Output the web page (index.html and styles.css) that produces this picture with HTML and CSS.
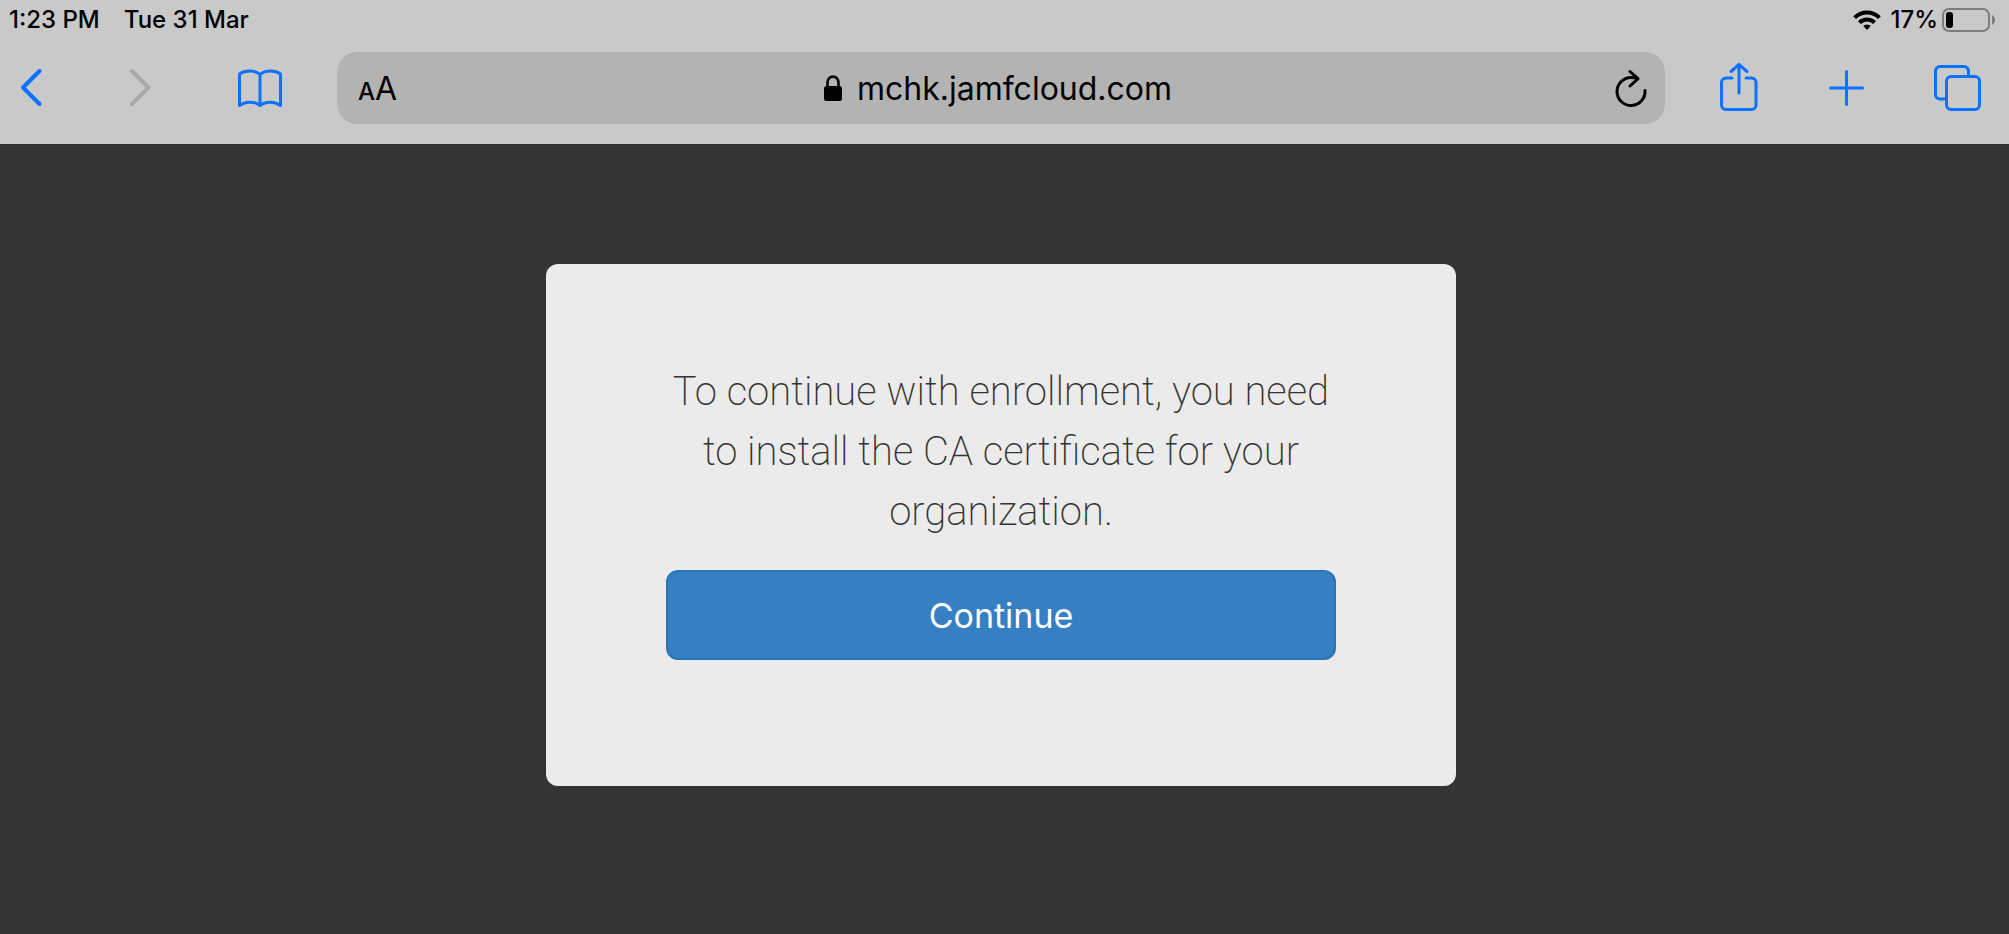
FILE: index.html
```html
<!DOCTYPE html>
<html lang="en">
<head>
<meta charset="utf-8">
<meta name="viewport" content="width=device-width, initial-scale=1">
<title>Enrollment</title>
<link rel="stylesheet" href="styles.css">
</head>
<body>
<header class="browser">
  <div class="status">
    <time>1:23 PM</time>
    <time>Tue 31 Mar</time>
    <div class="status-right">
      <svg class="wifi" width="28" height="22" viewBox="0 0 28 22" fill="none" stroke="#000" stroke-width="4" aria-label="Wi-Fi" role="img">
        <path d="M1.6 8.6a17.6 17.6 0 0 1 24.8 0M6.4 13.6a10.8 10.8 0 0 1 15.2 0"/>
        <path d="M14 21l-3.8-4a5.4 5.4 0 0 1 7.6 0z" fill="#000" stroke="none"/>
      </svg>
      <span>17%</span>
      <svg class="battery" width="54" height="24" viewBox="0 0 54 24" aria-label="Battery" role="img">
        <rect x="1" y="1" width="46" height="22" rx="6" fill="none" stroke="#7c7c7c" stroke-width="2"/>
        <rect x="4" y="4" width="7" height="16" rx="3" fill="#000"/>
        <path d="M50 7c4 2 4 8 0 10z" fill="#7c7c7c"/>
      </svg>
    </div>
  </div>
  <nav class="toolbar">
    <div class="group group-left">
      <button type="button" class="chevron" aria-label="Back"><svg width="22" height="50" viewBox="0 0 22 50"><path d="M18.500 8L2 24.500l16.500 16.500"/></svg></button>
      <button type="button" class="chevron off" aria-label="Forward" disabled><svg width="22" height="50" viewBox="0 0 22 50"><path d="M3 8l16.500 16.500L3 41"/></svg></button>
      <button type="button" aria-label="Bookmarks"><svg width="46" height="50" viewBox="0 0 46 50"><path d="M23 42.500C17.500 38 8.500 38 2.500 42.500V11C8 7 18 7 23 11.500C28 7 38 7 43.500 11V42.500C37.500 38 28.500 38 23 42.500zM23 11.500v31"/></svg></button>
    </div>
    <div class="address">
      <button type="button" class="text-size" aria-label="Page text size"><span class="small-a">A</span><span>A</span></button>
      <label class="location">
        <svg width="18" height="26" viewBox="0 0 18 26" aria-label="Secure" role="img"><rect y="11" width="18" height="15" rx="2.500"/><path d="M3.500 12V8c0-8.500 11-8.500 11 0v4" fill="none" stroke="#000" stroke-width="2.600"/></svg>
        <input type="text" value="mchk.jamfcloud.com" aria-label="Address">
      </label>
      <button type="button" class="reload" aria-label="Reload"><svg width="34" height="50" viewBox="0 0 34 50"><path d="M31 27.500A14 14 0 1 1 17 14.500c2.500 0 4.500.2 7 1M16 8.500l8 7.200-8 7.300"/></svg></button>
    </div>
    <div class="group group-right">
      <button type="button" aria-label="Share"><svg width="40" height="50" viewBox="0 0 40 50"><path d="M13 15H7a4.500 4.500 0 0 0-4.500 4.500V42A4.500 4.500 0 0 0 7 46.500H32.500A4.500 4.500 0 0 0 37 42V19.500A4.500 4.500 0 0 0 32.500 15H27M20 30V2M12 8.500L20 1.500l8 7"/></svg></button>
      <button type="button" aria-label="New tab"><svg width="38" height="50" viewBox="0 0 38 50"><path d="M19.500 8.500v33M3.500 25h32"/></svg></button>
      <button type="button" aria-label="Tabs"><svg width="50" height="50" viewBox="0 0 50 50"><rect x="13.500" y="13.500" width="33" height="33" rx="4.500"/><path d="M35.500 13V8A4.500 4.500 0 0 0 31 3.500H7A4.500 4.500 0 0 0 2.500 8V31.500A4.500 4.500 0 0 0 7 36h6"/></svg></button>
    </div>
  </nav>
</header>
<main class="page">
  <section class="card">
    <p>To continue with enrollment, you need to install the CA certificate for your organization.</p>
    <button type="button" class="continue">Continue</button>
  </section>
</main>
</body>
</html>
```
FILE: styles.css
```css
* {
  box-sizing: border-box;
}

body {
  margin: 0;
  min-height: 100vh;
  display: flex;
  flex-direction: column;
  background: #343434;
  color: #000;
  font-family: Inter, "Liberation Sans", sans-serif;
}

button,
input {
  border: 0;
  padding: 0;
  background: none;
  color: inherit;
  font: inherit;
}

svg {
  display: block;
}

.browser {
  background: #c9c9c9;
  border-bottom: 1px solid #292929;
  padding-bottom: 20px;
}

.status {
  display: flex;
  align-items: center;
  gap: 24px;
  height: 40px;
  margin-bottom: 12px;
  padding: 0 13px 0 9px;
  font-size: 24px;
  font-weight: 500;
  line-height: 40px;
}

.status-right {
  display: flex;
  align-items: center;
  margin-left: auto;
}

.wifi {
  margin-right: 9px;
}

.battery {
  margin-left: 4px;
}

.toolbar {
  display: flex;
  align-items: center;
  padding: 0 26px 0 21px;
}

.group {
  display: flex;
  align-items: center;
}

.group button,
.reload {
  fill: none;
  stroke: #0a72ff;
  stroke-width: 3;
  stroke-linecap: round;
  stroke-linejoin: round;
}

.group .chevron {
  stroke-width: 4;
}

.group .off {
  stroke: #a9a9a9;
}

.group-left {
  gap: 86px;
}

.group-right {
  gap: 68px;
}

.address {
  flex: 1;
  display: grid;
  grid-template-columns: 1fr auto 1fr;
  align-items: center;
  height: 72px;
  margin: 0 54px;
  padding: 0 17px 0 21px;
  border-radius: 20px;
  background: #b3b3b3;
  font-size: 32px;
}

.text-size {
  justify-self: start;
}

.small-a {
  font-size: 24px;
  font-weight: 500;
}

.location {
  display: flex;
  align-items: center;
  gap: 15px;
  padding-right: 10px;
}

.location input {
  field-sizing: content;
}

.address .reload {
  justify-self: end;
  stroke: #000;
}

.page {
  flex: 1;
  padding: 119px 7px 60px 0;
}

.card {
  width: 100%;
  max-width: 910px;
  margin: 0 auto;
  padding: 98px 120px 126px;
  border-radius: 12px;
  background: #ebebeb;
}

.card p {
  margin: 0 0 28px;
  color: #333;
  font-family: Roboto, "Liberation Sans", sans-serif;
  font-size: 40px;
  font-weight: 200;
  line-height: 60px;
  text-align: center;
}

.continue {
  width: 100%;
  height: 90px;
  border: 2px solid #2a75b8;
  border-radius: 12px;
  background: #367fc3;
  color: #fff;
  font-size: 34px;
  font-weight: 400;
}
```
